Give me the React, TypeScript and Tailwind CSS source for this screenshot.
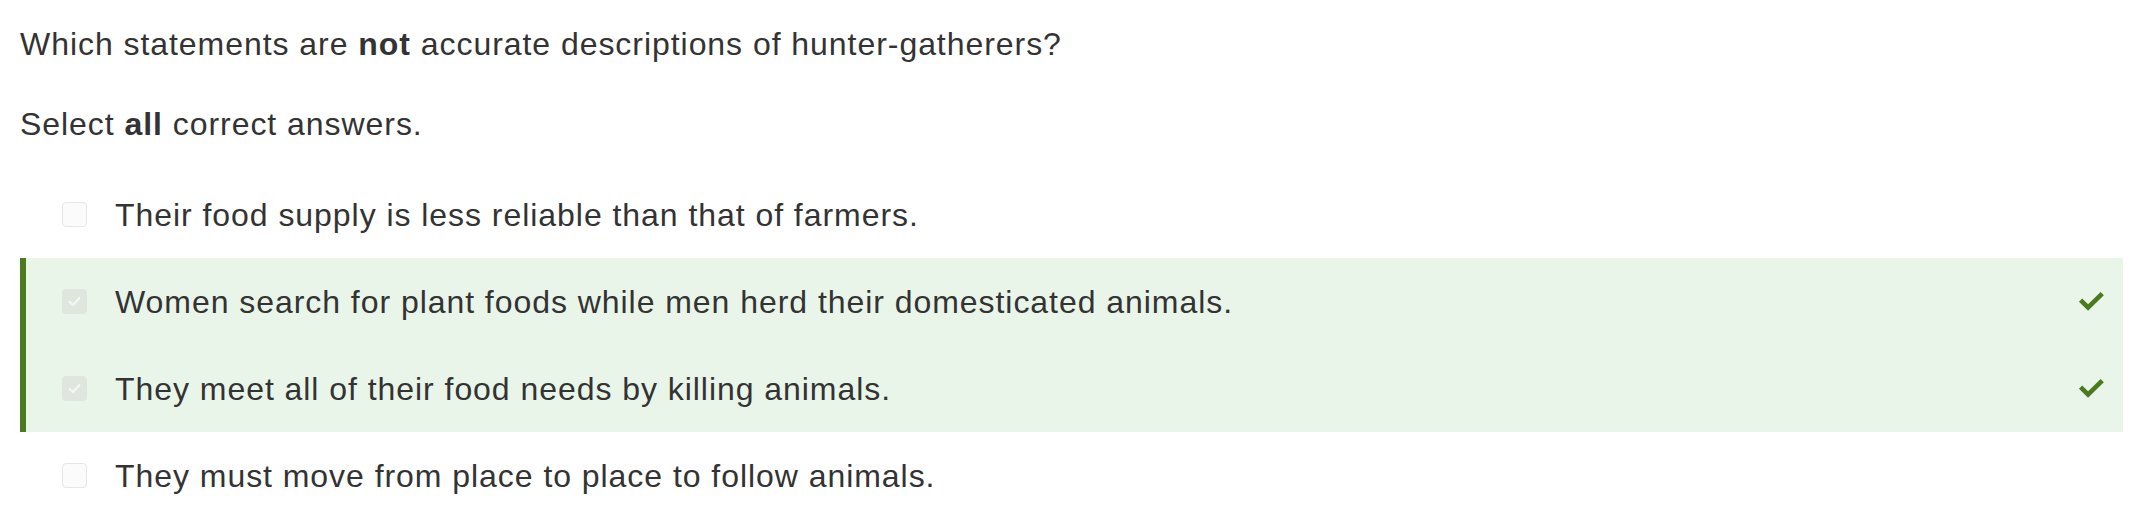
const OPTIONS = [
  { text: "Their food supply is less reliable than that of farmers.", correct: false },
  { text: "Women search for plant foods while men herd their domesticated animals.", correct: true },
  { text: "They meet all of their food needs by killing animals.", correct: true },
  { text: "They must move from place to place to follow animals.", correct: false },
];

function Box({ checked }: { checked: boolean }) {
  if (!checked) {
    return <span className="w-[25px] h-[25px] shrink-0 rounded-[4px] border border-[#e6e6e6] bg-[#fbfbfb]" />;
  }
  return (
    <span className="w-[25px] h-[25px] shrink-0 rounded-[4px] bg-[#dfe6dd] flex items-center justify-center">
      <svg viewBox="0 0 24 24" className="w-[17px] h-[17px]" fill="none" stroke="#f4f7f3" strokeWidth="3" strokeLinecap="round" strokeLinejoin="round">
        <path d="M5 12.5 L10 17 L19 7" />
      </svg>
    </span>
  );
}

function Check() {
  return (
    <svg viewBox="0 0 28 20" className="w-[27px] h-[19px]" fill="#4a7a1d">
      <path d="M0.8 10.2 L4.2 6.8 L10.4 13 L23.6 0 L27 3.4 L10.4 19.8 Z" />
    </svg>
  );
}

export default function App() {
  return (
    <div className="bg-white min-h-[532px] pl-[20px] pr-[29px] pt-[20px] text-[#333333] text-[32px] leading-[48px] tracking-[0.95px] font-['Liberation_Sans',Arial,sans-serif]">
      <p>
        Which statements are <b>not</b> accurate descriptions of hunter-gatherers?
      </p>
      <p className="mt-[32px]">
        Select <b>all</b> correct answers.
      </p>
      <div className="mt-[23px] flex flex-col">
        {OPTIONS.map((o) => (
          <div
            key={o.text}
            className={`h-[87px] flex items-center ${
              o.correct ? "bg-[#eaf5e9] border-l-[6px] border-[#4b7b1f] pl-[36px] pr-[18px]" : "pl-[42px] pr-[18px]"
            }`}
          >
            <Box checked={o.correct} />
            <span className="ml-[28px] flex-1">{o.text}</span>
            {o.correct && <Check />}
          </div>
        ))}
      </div>
    </div>
  );
}
